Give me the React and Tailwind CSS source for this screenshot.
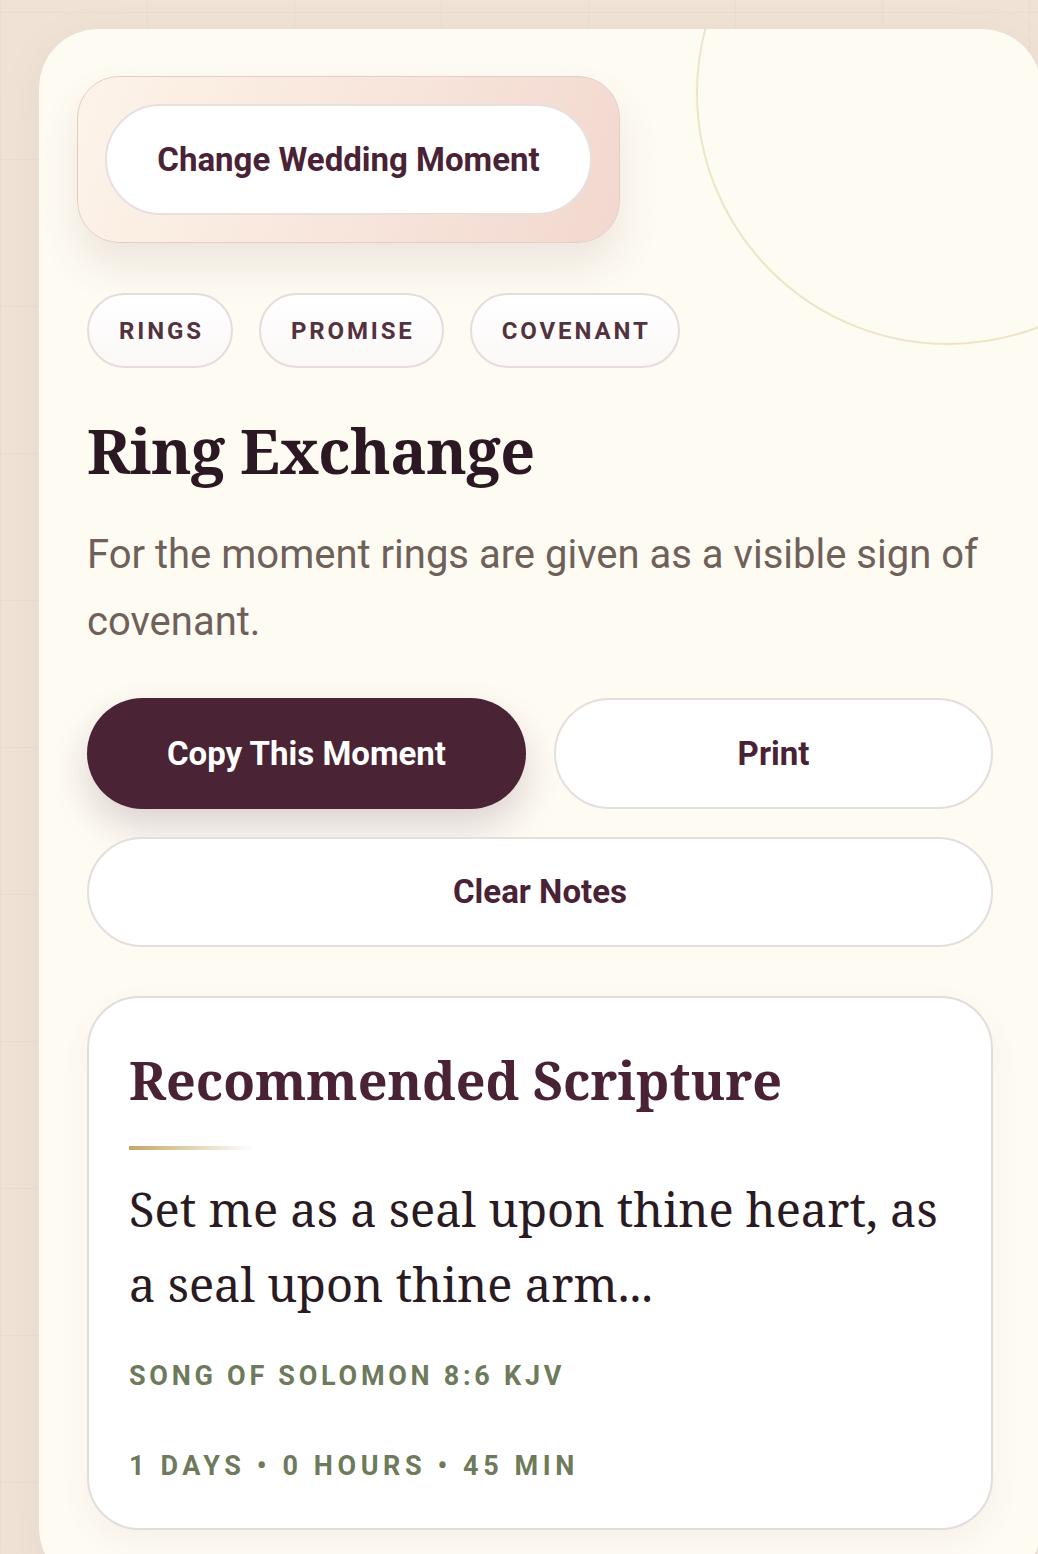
import React from 'react';

const SANS = "font-['Roboto','Liberation_Sans',sans-serif]";
const SERIF = "font-['Noto_Serif','DejaVu_Serif','Liberation_Serif',serif]";

const tags = ['RINGS', 'PROMISE', 'COVENANT'];

const App = () => {
    return (
        <div className={`min-h-[1554px] w-[1038px] overflow-hidden bg-[#f0e3d6] bg-[linear-gradient(rgba(190,160,130,0.08)_1px,transparent_1px),linear-gradient(90deg,rgba(190,160,130,0.08)_1px,transparent_1px)] bg-[size:147px_147px] bg-[position:0_12px] pt-[28px] pl-[38px] ${SANS}`}>
            {/* MAIN CARD */}
            <div className="relative w-[1004px] min-h-[1560px] overflow-hidden rounded-[60px] border border-[#eadfd3] bg-[#fefbf3] px-[48px] pt-[47px] shadow-[0_10px_40px_rgba(120,80,60,0.08)]">
                {/* decorative circle */}
                <div className="pointer-events-none absolute top-[-188px] right-[-159px] h-[504px] w-[504px] rounded-full border-2 border-[#eee4c8]"></div>

                <div className="relative">
                    {/* CHANGE MOMENT */}
                    <div className="ml-[-10px] w-[543px] rounded-[42px] border border-[#e3cdc4] bg-[linear-gradient(110deg,#fdf4e9_0%,#f8e6dc_50%,#f2d8cf_100%)] p-[27px] shadow-[0_24px_40px_rgba(120,80,70,0.12)]">
                        <button className="flex h-[111px] w-full items-center justify-center rounded-full border-2 border-[#e8dfdf] bg-white text-[33px] font-bold text-[#4a2236]">
                            Change Wedding Moment
                        </button>
                    </div>

                    {/* TAGS */}
                    <div className="mt-[50px] flex gap-[26px]">
                        {tags.map((tag) => (
                            <span key={tag} className="flex h-[75px] items-center rounded-full border-2 border-[#e6dcdc] bg-[linear-gradient(180deg,#ffffff,#fbf8f7)] pl-[30px] pr-[27px] text-[24px] font-bold tracking-[0.12em] text-[#53323f]">
                                {tag}
                            </span>
                        ))}
                    </div>

                    {/* TITLE */}
                    <h1 className={`mt-[46px] text-[61px] font-bold leading-[1.2] tracking-[-0.5px] text-[#2b1822] ${SERIF}`}>
                        Ring Exchange
                    </h1>
                    <p className="mt-[34px] text-[40px] leading-[67px] text-[#6f615a]">
                        For the moment rings are given as a visible sign of covenant.
                    </p>

                    {/* ACTIONS */}
                    <div className="mt-[43px] grid grid-cols-2 gap-[28px]">
                        <button className="h-[111px] rounded-full bg-[#4a2335] text-[33px] font-bold text-white shadow-[0_18px_36px_rgba(74,35,53,0.18)]">
                            Copy This Moment
                        </button>
                        <button className="h-[111px] rounded-full border-2 border-[#e6dddd] bg-white text-[33px] font-bold text-[#4a2236]">
                            Print
                        </button>
                        <button className="col-span-2 h-[110px] rounded-full border-2 border-[#e6dddd] bg-white text-[33px] font-bold text-[#4a2236]">
                            Clear Notes
                        </button>
                    </div>

                    {/* SCRIPTURE */}
                    <div className="mt-[49px] w-full rounded-[52px] border-2 border-[#e4dcdc] bg-white px-[40px] pt-[48px] pb-[46px] shadow-[0_12px_30px_rgba(120,90,70,0.06)]">
                        <h2 className={`text-[52px] font-bold leading-[1.3] text-[#4a2236] ${SERIF}`}>
                            Recommended Scripture
                        </h2>
                        <div className="mt-[32px] h-[4px] w-[124px] bg-[linear-gradient(90deg,#c4a766,rgba(196,167,102,0))]"></div>
                        <p className={`mt-[22px] text-[47px] leading-[75px] text-[#2a1a22] ${SERIF}`}>
                            Set me as a seal upon thine heart, as a seal upon thine arm...
                        </p>
                        <p className="mt-[38px] text-[27px] font-bold leading-[32px] tracking-[0.138em] text-[#6d7a5b]">
                            SONG OF SOLOMON 8:6 KJV
                        </p>
                        <p className="mt-[58px] text-[27px] font-bold leading-[32px] tracking-[0.17em] text-[#6d7a5b]">
                            1 DAYS • 0 HOURS • 45 MIN
                        </p>
                    </div>
                </div>
            </div>
        </div>
    );
};

export default App;
